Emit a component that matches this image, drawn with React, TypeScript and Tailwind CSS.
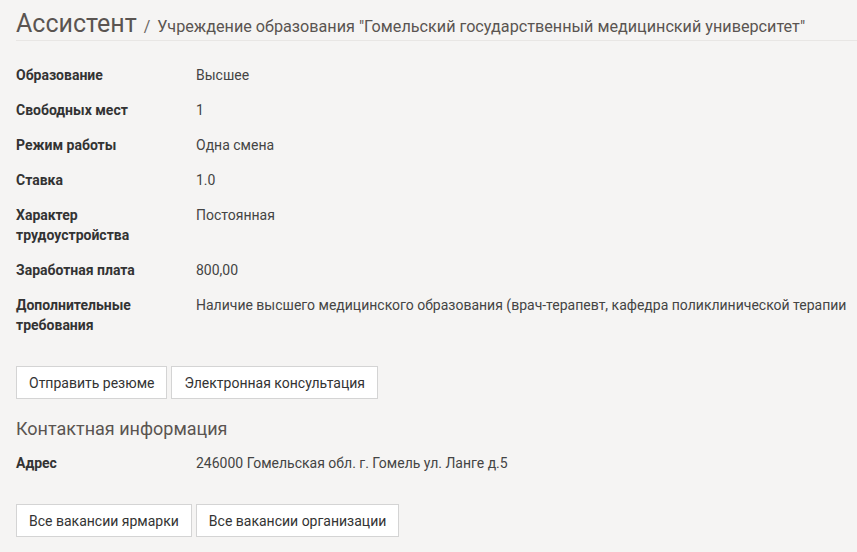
import React from "react";

const rows: [string, string][] = [
  ["Образование", "Высшее"],
  ["Свободных мест", "1"],
  ["Режим работы", "Одна смена"],
  ["Ставка", "1.0"],
  ["Характер трудоустройства", "Постоянная"],
  ["Заработная плата", "800,00"],
  [
    "Дополнительные требования",
    "Наличие высшего медицинского образования (врач-терапевт, кафедра поликлинической терапии",
  ],
];

function Row({ label, value }: { label: string; value: string }) {
  return (
    <div className="flex mb-[15px] text-[14px] leading-[20px]">
      <div className="w-[180px] shrink-0 pr-[30px] font-bold text-[#333333]">{label}</div>
      <div className="flex-1 min-w-0 whitespace-nowrap text-[#444444]">{value}</div>
    </div>
  );
}

function Btn({ children }: { children: React.ReactNode }) {
  return (
    <button className="h-[33px] px-[12px] bg-white border border-[#d4d4d4] text-[14px] text-[#333333] leading-[20px]">
      {children}
    </button>
  );
}

export default function App() {
  return (
    <div
      className="min-h-[552px] w-full bg-[#f5f4f3] pl-[16px] overflow-hidden"
      style={{ fontFamily: "Roboto, 'Liberation Sans', sans-serif" }}
    >
      <div className="pt-[9px] pb-[1px] border-b border-[#e8e6e4] flex items-baseline whitespace-nowrap">
        <span className="text-[25px] leading-[30px] text-[#5a5451]">Ассистент</span>
        <span className="text-[16px] text-[#6a6461] mx-[7px]">/</span>
        <span className="text-[16.2px] text-[#5a5451]">
          Учреждение образования "Гомельский государственный медицинский университет"
        </span>
      </div>
      <div className="pt-[24px]">
        {rows.map(([l, v]) => (
          <Row key={l} label={l} value={v} />
        ))}
      </div>
      <div className="flex gap-[4px] mt-[31px]">
        <Btn>Отправить резюме</Btn>
        <Btn>Электронная консультация</Btn>
      </div>
      <div className="mt-[18px] mb-[12px] text-[18px] leading-[24px] text-[#5a5451]">Контактная информация</div>
      <Row label="Адрес" value="246000 Гомельская обл. г. Гомель ул. Ланге д.5" />
      <div className="flex gap-[4px] mt-[31px]">
        <Btn>Все вакансии ярмарки</Btn>
        <Btn>Все вакансии организации</Btn>
      </div>
    </div>
  );
}
